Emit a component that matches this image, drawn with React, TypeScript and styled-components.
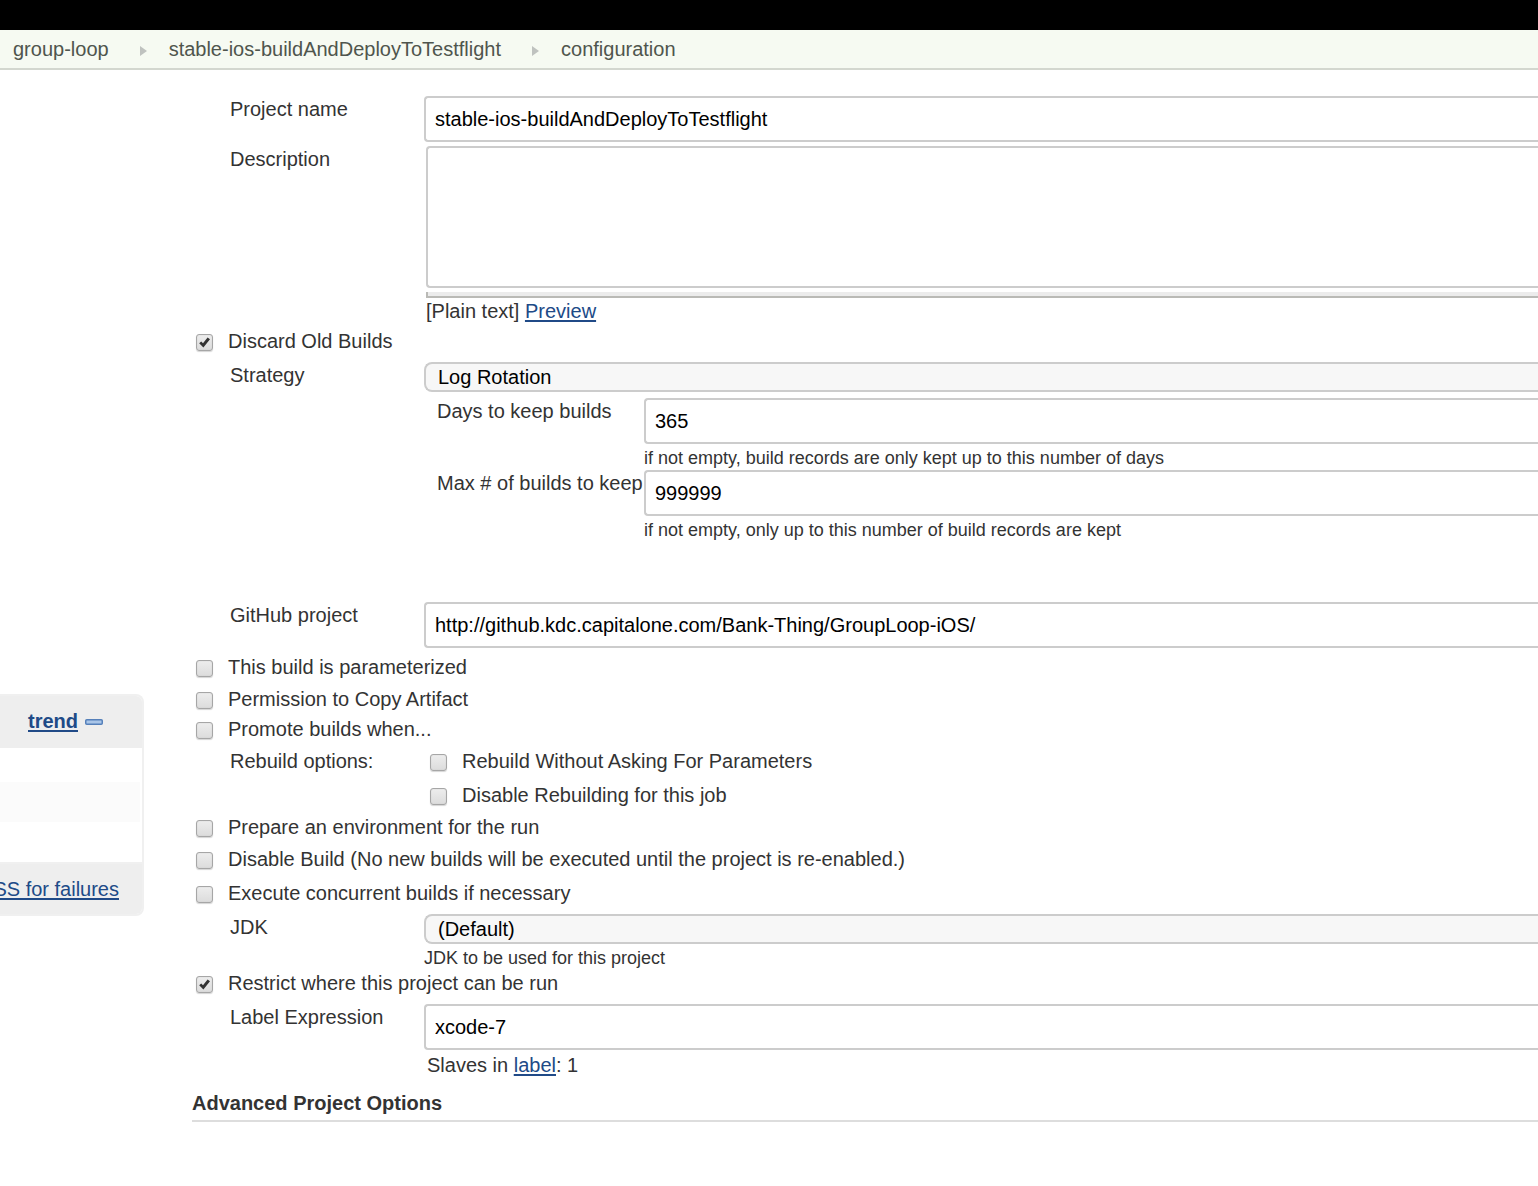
import React from "react";
import styled, { createGlobalStyle } from "styled-components";

const GlobalStyle = createGlobalStyle`
  *, *::before, *::after { box-sizing: border-box; }
  body {
    margin: 0;
    background: #fff;
    color: #333;
    font: 20px/26px "Liberation Sans", Helvetica, Arial, sans-serif;
  }
`;

const LINK = "#204a87";
const BORDER = "#ccc";

const TopBar = styled.header`
  height: 30px;
  background: #000;
`;

const Breadcrumbs = styled.nav`
  display: flex;
  align-items: center;
  padding: 0 13px;
  background: #f6faf2;
  border-bottom: 2px solid #d3d7cf;
  line-height: 38px;
  white-space: nowrap;
`;

const Crumb = styled.a`
  color: #4f554d;
  text-decoration: none;
`;

const CrumbArrow = styled.span`
  width: 0;
  margin: 4px 22px 0 31px;
  border: 5px solid transparent;
  border-left: 7px solid #bfc2bf;
  border-right: 0;
`;

const Page = styled.div`
  display: grid;
  grid-template-columns: 144px minmax(0, 1fr);
  column-gap: 48px;
  align-items: start;
`;

const Sidebar = styled.aside`
  padding-top: 624px;
`;

const HistoryPanel = styled.section`
  border: 2px solid #f0f0f0;
  border-left: 0;
  border-radius: 0 8px 8px 0;
  overflow: hidden;
`;

const PanelHeader = styled.div`
  display: flex;
  align-items: center;
  gap: 7px;
  height: 52px;
  padding: 0 0 2px 28px;
  background: #eee;
  font-weight: bold;
`;

const PanelRow = styled.div<{ $shaded?: boolean; $height: number }>`
  height: ${(p) => p.$height}px;
  margin-right: 2px;
  background: ${(p) => (p.$shaded ? "#fbfbfb" : "#fff")};
`;

const PanelFooter = styled.div`
  display: flex;
  justify-content: flex-end;
  height: 52px;
  padding: 12px 23px 0 0;
  background: #eee;
  border-top: 2px solid #f0f0f0;
  white-space: nowrap;
`;

const Link = styled.a`
  color: ${LINK};
  text-decoration: underline;
  text-decoration-thickness: 2px;
  text-underline-offset: 2px;
  text-decoration-skip-ink: none;
`;

const CollapseButton = styled.button`
  display: flex;
  padding: 2px 0 0;
  border: 0;
  background: none;
`;

const Form = styled.form`
  padding: 26px 0 64px;
`;

const Row = styled.div<{ $space?: number }>`
  display: grid;
  grid-template-columns: 232px minmax(0, 1fr);
  margin-top: ${(p) => p.$space ?? 0}px;
`;

const NestedRow = styled(Row)`
  grid-template-columns: 220px minmax(0, 1fr);
  margin-left: 232px;
`;

const Label = styled.label<{ $indent?: number }>`
  padding-left: ${(p) => p.$indent ?? 38}px;
  white-space: nowrap;
`;

const Caption = styled.span`
  padding-left: 38px;
`;

const TextInput = styled.input`
  display: block;
  width: 100%;
  height: 46px;
  padding: 0 9px;
  border: 2px solid ${BORDER};
  border-right: 0;
  border-radius: 4px 0 0 4px;
  background: #fff;
  color: #000;
  font: inherit;
  outline: 0;
`;

const DescriptionBox = styled.div`
  padding-left: 2px;
`;

const TextArea = styled.textarea`
  display: block;
  width: 100%;
  height: 142px;
  padding: 8px;
  border: 2px solid ${BORDER};
  border-right: 0;
  border-radius: 4px 0 0 4px;
  font: inherit;
  resize: none;
  outline: 0;
`;

const ResizeHandle = styled.div`
  height: 6px;
  margin-top: 4px;
  background: #ececec;
  border: solid #babab6;
  border-width: 0 0 2px 2px;
`;

const Select = styled.select`
  display: block;
  width: 100%;
  height: 30px;
  padding: 0 12px;
  appearance: none;
  border: 2px solid ${BORDER};
  border-right: 0;
  border-radius: 8px 0 0 8px;
  background: #f7f7f7;
  color: #000;
  font: inherit;
  line-height: 26px;
  outline: 0;
`;

const Hint = styled.div`
  padding-top: 2px;
  font-size: 18px;
  line-height: 24px;
`;

const Note = styled.div`
  padding: 2px 0 0 3px;
`;

const CheckLabel = styled.label<{ $space?: number; $indent?: number }>`
  display: flex;
  gap: 15px;
  margin-top: ${(p) => p.$space ?? 0}px;
  padding-left: ${(p) => p.$indent ?? 4}px;
`;

const CheckHolder = styled.span`
  display: grid;
  flex: none;
  width: 17px;
  height: 17px;
  margin-top: 6px;
`;

const CheckBox = styled.input`
  grid-area: 1 / 1;
  width: 17px;
  height: 17px;
  margin: 0;
  appearance: none;
  border: 1px solid #a6a6a6;
  border-radius: 3px;
  background: linear-gradient(#ededed, #dcdcdc);
  box-shadow: 0 1px 1px #d5d5d5, inset 0 0 1px #bbb;
`;

const Tick = styled.svg`
  grid-area: 1 / 1;
  z-index: 1;
  pointer-events: none;
`;

const SectionTitle = styled.h2`
  margin: 12px 0 0;
  padding-bottom: 4px;
  border-bottom: 2px solid #ddd;
  font-size: 20px;
  line-height: 26px;
`;

type CheckProps = {
  children: React.ReactNode;
  checked?: boolean;
  space?: number;
  indent?: number;
};

function Check({ children, checked = false, space, indent }: CheckProps) {
  const [on, setOn] = React.useState(checked);
  return (
    <CheckLabel $space={space} $indent={indent}>
      <CheckHolder>
        <CheckBox type="checkbox" checked={on} onChange={() => setOn(!on)} />
        {on && (
          <Tick width="17" height="17" viewBox="0 0 17 17" aria-hidden="true">
            <path d="M3.2 9.2 L5.2 7.4 L7 9.2 L11.6 3.4 L14 5.2 L7.4 13.4 Z" fill="#333" />
          </Tick>
        )}
      </CheckHolder>
      <span>{children}</span>
    </CheckLabel>
  );
}

export default function App() {
  return (
    <>
      <GlobalStyle />
      <TopBar />
      <Breadcrumbs>
        <Crumb href="#group">group-loop</Crumb>
        <CrumbArrow />
        <Crumb href="#job">stable-ios-buildAndDeployToTestflight</Crumb>
        <CrumbArrow />
        <Crumb href="#configuration">configuration</Crumb>
      </Breadcrumbs>
      <Page>
        <Sidebar>
          <HistoryPanel>
            <PanelHeader>
              <Link href="#trend">trend</Link>
              <CollapseButton type="button" aria-label="Collapse">
                <svg width="18" height="6" viewBox="0 0 18 6">
                  <rect x="0.75" y="0.75" width="16.5" height="4.5" rx="1" fill="#a9c5e8" stroke="#5580ba" strokeWidth="1.5" />
                </svg>
              </CollapseButton>
            </PanelHeader>
            <PanelRow $height={34} />
            <PanelRow $height={40} $shaded />
            <PanelRow $height={40} />
            <PanelFooter>
              <Link href="#failures">SS for failures</Link>
            </PanelFooter>
          </HistoryPanel>
        </Sidebar>
        <main>
          <Form>
            <Row>
              <Label htmlFor="name">Project name</Label>
              <TextInput id="name" defaultValue="stable-ios-buildAndDeployToTestflight" />
            </Row>
            <Row $space={4}>
              <Label htmlFor="description">Description</Label>
              <DescriptionBox>
                <TextArea id="description" />
                <ResizeHandle />
                <div>
                  [Plain text] <Link href="#preview">Preview</Link>
                </div>
              </DescriptionBox>
            </Row>
            <Check checked space={4}>Discard Old Builds</Check>
            <Row $space={8}>
              <Label htmlFor="strategy">Strategy</Label>
              <Select id="strategy">
                <option>Log Rotation</option>
              </Select>
            </Row>
            <NestedRow $space={6}>
              <Label htmlFor="days" $indent={13}>Days to keep builds</Label>
              <div>
                <TextInput id="days" defaultValue="365" />
                <Hint>if not empty, build records are only kept up to this number of days</Hint>
              </div>
            </NestedRow>
            <NestedRow>
              <Label htmlFor="max" $indent={13}>Max # of builds to keep</Label>
              <div>
                <TextInput id="max" defaultValue="999999" />
                <Hint>if not empty, only up to this number of build records are kept</Hint>
              </div>
            </NestedRow>
            <Row $space={60}>
              <Label htmlFor="github">GitHub project</Label>
              <TextInput id="github" defaultValue="http://github.kdc.capitalone.com/Bank-Thing/GroupLoop-iOS/" />
            </Row>
            <Check space={6}>This build is parameterized</Check>
            <Check space={6}>Permission to Copy Artifact</Check>
            <Check space={4}>Promote builds when...</Check>
            <Row $space={6}>
              <Caption>Rebuild options:</Caption>
              <div>
                <Check indent={6}>Rebuild Without Asking For Parameters</Check>
                <Check indent={6} space={8}>Disable Rebuilding for this job</Check>
              </div>
            </Row>
            <Check space={6}>Prepare an environment for the run</Check>
            <Check space={6}>Disable Build (No new builds will be executed until the project is re-enabled.)</Check>
            <Check space={8}>Execute concurrent builds if necessary</Check>
            <Row $space={8}>
              <Label htmlFor="jdk">JDK</Label>
              <div>
                <Select id="jdk">
                  <option>(Default)</option>
                </Select>
                <Hint>JDK to be used for this project</Hint>
              </div>
            </Row>
            <Check checked>Restrict where this project can be run</Check>
            <Row $space={8}>
              <Label htmlFor="expression">Label Expression</Label>
              <div>
                <TextInput id="expression" defaultValue="xcode-7" />
                <Note>
                  Slaves in <Link href="#label">label</Link>: 1
                </Note>
              </div>
            </Row>
            <SectionTitle>Advanced Project Options</SectionTitle>
          </Form>
        </main>
      </Page>
    </>
  );
}
